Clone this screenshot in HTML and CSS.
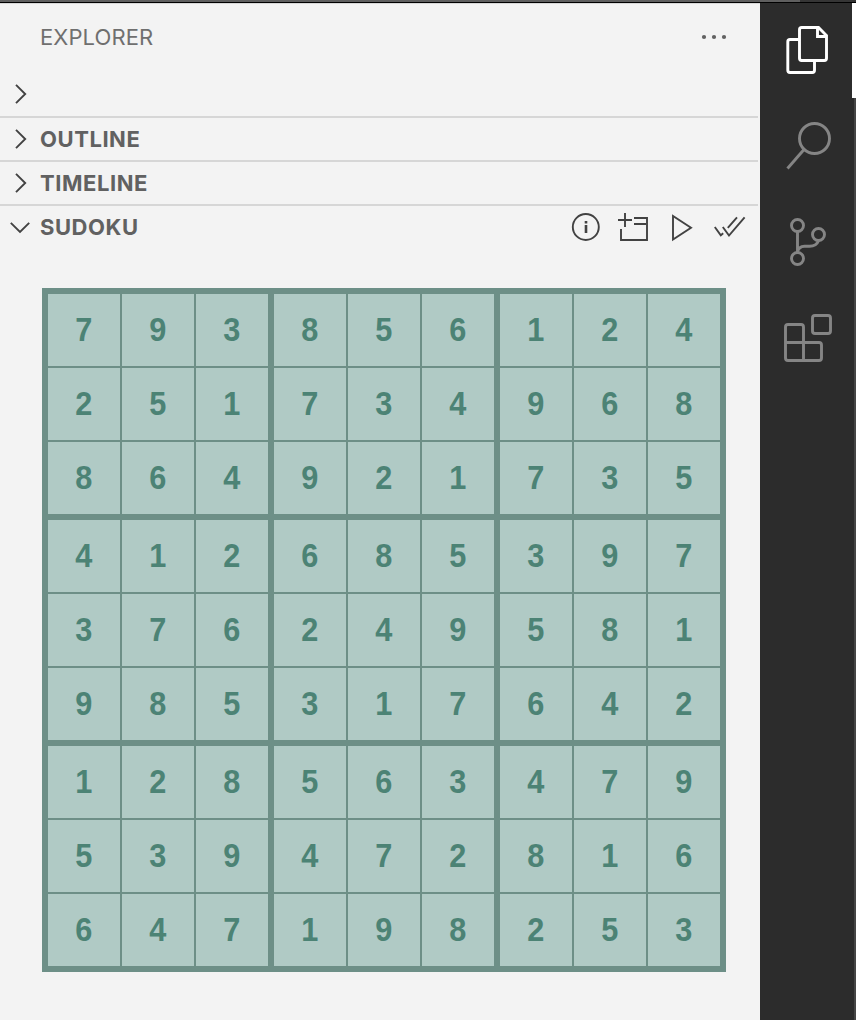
FILE: index.html
```html
<!DOCTYPE html>
<html lang="en">
<head>
<meta charset="utf-8">
<title>Sudoku</title>
<link rel="stylesheet" href="styles.css">
</head>
<body>
<div class="topline"></div>
<div class="workbench">
  <main class="sidebar">
    <header class="title"><h1 class="label">EXPLORER</h1>
      <svg class="more" width="28" height="8" viewBox="0 0 28 8"><circle cx="4" cy="4" r="2.1"/><circle cx="14" cy="4" r="2.1"/><circle cx="24" cy="4" r="2.1"/></svg>
    </header>
    <section class="row first"><svg class="chev" viewBox="0 0 20 20"><path d="M6 .8 15.2 10 6 19.2"/></svg></section>
    <section class="row"><svg class="chev" viewBox="0 0 20 20"><path d="M6 .8 15.2 10 6 19.2"/></svg><h2 class="label">OUTLINE</h2></section>
    <section class="row"><svg class="chev" viewBox="0 0 20 20"><path d="M6 .8 15.2 10 6 19.2"/></svg><h2 class="label">TIMELINE</h2></section>
    <section class="row"><svg class="chev" viewBox="0 0 20 20"><path d="M.8 5.8 10 15 19.2 5.8"/></svg><h2 class="label">SUDOKU</h2>
      <div class="actions">
        <svg viewBox="570 211 32 32"><circle cx="585.8" cy="227" r="13"/><path d="M586 225v8M586 221v2.600" stroke-width="2.600"/></svg>
        <svg viewBox="618 211 32 32"><path d="M618 220h14M625 213v14M634 218h13v22h-26v-11M634 224h12"/></svg>
        <svg viewBox="666 211 32 32"><path d="M673 216v23.500l18-11.800z"/></svg>
        <svg viewBox="714 211 32 32"><path d="m714.800 227 6 8.300 2.400-2M722.800 227l6.200 8.500 15.600-18.100M727.800 227.800l9.200-10.400"/></svg>
      </div>
    </section>
    <div class="board" id="board"></div>
  </main>
  <nav class="activity">
    <div class="item active"><svg viewBox="760 3 92 95"><path d="M799.500 39.500h-9.500q-2.200 0-2.200 2.200v28.600q0 2.200 2.200 2.200h22.300q2.200 0 2.200-2.200v-9M801.700 27.500h16.800l8 8v22.800q0 2.200-2.200 2.200h-22.600q-2.200 0-2.200-2.200V29.700q0-2.200 2.200-2.200M817.500 27.500v9h9"/></svg></div>
    <div class="item"><svg viewBox="760 98 92 96"><circle cx="814.500" cy="138.500" r="15"/><path d="m804 149.500-16.500 19"/></svg></div>
    <div class="item"><svg viewBox="760 194 92 96"><circle cx="797.500" cy="225.500" r="6"/><circle cx="818.500" cy="234.500" r="6"/><circle cx="797.500" cy="258.500" r="6"/><path d="M797.500 232v20c1-4.500 3-5.800 7-5.800h5c5 0 7.500-1.500 9-5.500"/></svg></div>
    <div class="item"><svg viewBox="760 290 92 96"><path d="M788 324.500h13q2.500 0 2.500 2.500v15.500h15.500q2.500 0 2.500 2.500v13q0 2.500-2.500 2.500H788q-2.500 0-2.500-2.500v-31q0-2.500 2.500-2.500M785.500 342.500h18v18"/><rect x="812.500" y="315.500" width="18" height="18" rx="2.500"/></svg></div>
  </nav>
</div>
<script src="board.js"></script>
</body>
</html>
```
FILE: styles.css
```css
* { box-sizing: border-box; }
body { margin: 0; height: 1020px; overflow: hidden; background: #f3f3f3; font-family: Inter, "Liberation Sans", sans-serif; }
svg { display: block; fill: none; }
.topline { height: 3px; border-bottom: 1px solid #000; background: linear-gradient(90deg, #5f5f5f 800px, #353535 800px); }
.workbench { display: flex; height: 1017px; }
.sidebar { width: 760px; border-top: 1px solid #d8d8d8; }
.title { display: flex; align-items: center; justify-content: space-between; height: 66px; padding: 0 32px 0 40px; }
.label { margin: 0; font-size: 22px; line-height: 28px; letter-spacing: .55px; color: #616161; white-space: nowrap; }
.title .label { font-weight: 400; letter-spacing: .1px; color: #6f6f6f; }
.more { fill: #616161; }
.row { display: flex; align-items: center; width: 758px; height: 44px; padding: 0 12px 0 10px; border-top: 2px solid #d6d6d6; }
.row.first { height: 46px; border-top: 0; padding-top: 2px; }
.chev { width: 20px; height: 20px; margin-right: 10px; stroke: #424242; stroke-width: 1.9; }
.actions { display: flex; gap: 16px; margin-left: auto; }
.actions svg { width: 32px; height: 32px; stroke: #424242; stroke-width: 1.9; }
.board { display: grid; grid-template-columns: repeat(3, 220px); gap: 6px; width: 684px; margin: 40px 0 0 42px; padding: 6px; background: #6d8f87; }
.box { display: grid; grid-template-columns: repeat(3, 72px); grid-auto-rows: 72px; gap: 2px; }
.cell { display: flex; align-items: center; justify-content: center; background: #b0cac5; color: #4c8375; font: bold 33px/36px "Liberation Sans", Arial, sans-serif; }
.digit { transform: translateX(-.5px) scaleX(.93); }
.activity { width: 96px; background: #2c2c2c; border-right: 2px solid #454545; }
.item { width: 92px; height: 96px; }
.item svg { width: 92px; height: 96px; stroke: #858585; stroke-width: 2.9; }
.item.active { width: 96px; height: 95px; border-right: 4px solid #fff; }
.item.active svg { height: 95px; stroke: #fff; }
```
FILE: board.js
```js
const rows = ["793856124", "251734968", "864921735", "412685397", "376249581", "985317642", "128563479", "539472816", "647198253"];
const board = document.getElementById("board");
for (let b = 0; b < 9; b++) {
  const box = document.createElement("div");
  box.className = "box";
  for (let c = 0; c < 9; c++) {
    const cell = document.createElement("div");
    cell.className = "cell";
    const digit = document.createElement("span");
    digit.className = "digit";
    digit.textContent = rows[Math.floor(b / 3) * 3 + Math.floor(c / 3)][(b % 3) * 3 + (c % 3)];
    cell.appendChild(digit);
    box.appendChild(cell);
  }
  board.appendChild(box);
}
```
